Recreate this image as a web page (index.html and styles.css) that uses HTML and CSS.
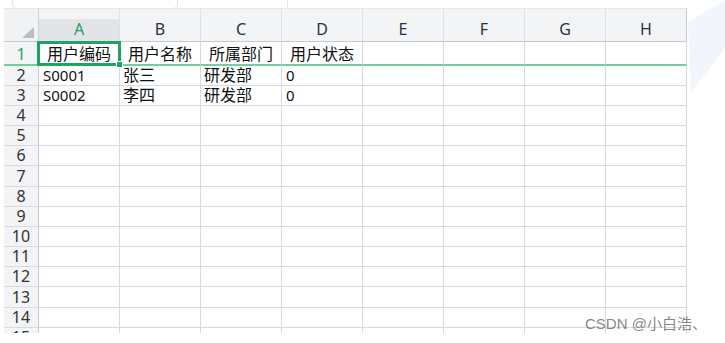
FILE: index.html
```html
<!DOCTYPE html>
<html>
<head>
<meta charset="utf-8">
<link rel="stylesheet" href="styles.css">
</head>
<body>
<div class="page">
  <svg class="deco" width="40" height="100" viewBox="0 0 40 100"><polygon points="0,22 37,0 37,48 3,92" fill="#f2f5fc"/></svg>
  <div class="topbar">
    <div class="tab1"></div>
    <div class="tab2"></div>
  </div>
  <div class="sheet">
    <div class="row head">
      <div class="corner"><span class="tri"></span></div>
      <div class="col sel-col">A</div><div class="col">B</div><div class="col">C</div><div class="col">D</div><div class="col">E</div><div class="col">F</div><div class="col">G</div><div class="col">H</div>
    </div>
    <div class="row r1">
      <div class="num active">1</div>
      <div class="cell first"><span class="txt">用户编码</span><div class="sel"><span class="handle"></span></div></div>
      <div class="cell"><span class="txt">用户名称</span></div>
      <div class="cell"><span class="txt">所属部门</span></div>
      <div class="cell"><span class="txt">用户状态</span></div>
      <div class="cell"></div><div class="cell"></div><div class="cell"></div><div class="cell"></div>
    </div>
    <div class="row r2">
      <div class="num">2</div>
      <div class="cell lat">S0001</div><div class="cell">张三</div><div class="cell">研发部</div><div class="cell lat">0</div>
      <div class="cell"></div><div class="cell"></div><div class="cell"></div><div class="cell"></div>
    </div>
    <div class="row r2">
      <div class="num">3</div>
      <div class="cell lat">S0002</div><div class="cell">李四</div><div class="cell">研发部</div><div class="cell lat">0</div>
      <div class="cell"></div><div class="cell"></div><div class="cell"></div><div class="cell"></div>
    </div>
    <div class="row"><div class="num">4</div><div class="cell"></div><div class="cell"></div><div class="cell"></div><div class="cell"></div><div class="cell"></div><div class="cell"></div><div class="cell"></div><div class="cell"></div></div>
    <div class="row"><div class="num">5</div><div class="cell"></div><div class="cell"></div><div class="cell"></div><div class="cell"></div><div class="cell"></div><div class="cell"></div><div class="cell"></div><div class="cell"></div></div>
    <div class="row"><div class="num">6</div><div class="cell"></div><div class="cell"></div><div class="cell"></div><div class="cell"></div><div class="cell"></div><div class="cell"></div><div class="cell"></div><div class="cell"></div></div>
    <div class="row"><div class="num">7</div><div class="cell"></div><div class="cell"></div><div class="cell"></div><div class="cell"></div><div class="cell"></div><div class="cell"></div><div class="cell"></div><div class="cell"></div></div>
    <div class="row"><div class="num">8</div><div class="cell"></div><div class="cell"></div><div class="cell"></div><div class="cell"></div><div class="cell"></div><div class="cell"></div><div class="cell"></div><div class="cell"></div></div>
    <div class="row"><div class="num">9</div><div class="cell"></div><div class="cell"></div><div class="cell"></div><div class="cell"></div><div class="cell"></div><div class="cell"></div><div class="cell"></div><div class="cell"></div></div>
    <div class="row"><div class="num">10</div><div class="cell"></div><div class="cell"></div><div class="cell"></div><div class="cell"></div><div class="cell"></div><div class="cell"></div><div class="cell"></div><div class="cell"></div></div>
    <div class="row"><div class="num">11</div><div class="cell"></div><div class="cell"></div><div class="cell"></div><div class="cell"></div><div class="cell"></div><div class="cell"></div><div class="cell"></div><div class="cell"></div></div>
    <div class="row"><div class="num">12</div><div class="cell"></div><div class="cell"></div><div class="cell"></div><div class="cell"></div><div class="cell"></div><div class="cell"></div><div class="cell"></div><div class="cell"></div></div>
    <div class="row"><div class="num">13</div><div class="cell"></div><div class="cell"></div><div class="cell"></div><div class="cell"></div><div class="cell"></div><div class="cell"></div><div class="cell"></div><div class="cell"></div></div>
    <div class="row"><div class="num">14</div><div class="cell"></div><div class="cell"></div><div class="cell"></div><div class="cell"></div><div class="cell"></div><div class="cell"></div><div class="cell"></div><div class="cell"></div></div>
    <div class="row"><div class="num">15</div><div class="cell"></div><div class="cell"></div><div class="cell"></div><div class="cell"></div><div class="cell"></div><div class="cell"></div><div class="cell"></div><div class="cell"></div></div>
  </div>
  <div class="watermark">CSDN @小白浩、</div>
</div>
</body>
</html>
```

FILE: styles.css
```css
* { box-sizing: border-box; }
html, body { margin: 0; padding: 0; background: #ffffff; }
.page {
  position: relative;
  width: 725px;
  height: 343px;
  overflow: hidden;
  font-family: "Noto Sans", "Noto Sans CJK SC", sans-serif;
  color: #1f1f1f;
}
.deco { position: absolute; left: 688px; top: 0; }
.topbar { height: 8px; display: flex; }
.tab1 {
  margin-left: 12px;
  width: 166px;
  height: 9px;
  border: 1px solid #dfe2e7;
  border-top: none;
  border-radius: 0 0 5px 5px;
}
.tab2 {
  margin-left: 109px;
  width: 10px;
  height: 9px;
  border-left: 1px solid #e3e5e9;
}
.sheet {
  margin-left: 4px;
  width: 684px;
  height: 325px;
  overflow: hidden;
  display: flex;
  flex-direction: column;
}
.row {
  display: grid;
  grid-template-columns: 35px repeat(8, 81px);
  height: 20.17px;
  flex: none;
}
.row.head { height: 34px; }
.row.r1 { height: 24px; }
.row.r2 { height: 20px; }
.corner {
  position: relative;
  background: #f1f2f4;
  border-top: 1px solid #e4e6ea;
  border-right: 1px solid #c9cdd6;
  border-bottom: 1px solid #c4c9d3;
}
.tri {
  position: absolute;
  left: 18px;
  top: 18px;
  width: 0;
  height: 0;
  border-left: 12px solid transparent;
  border-bottom: 11px solid #b9bdc5;
}
.col {
  display: flex;
  align-items: flex-end;
  justify-content: center;
  padding-bottom: 4px;
  font-size: 16px;
  line-height: 16px;
  color: #2a3344;
  background: #f3f4f6;
  border-top: 1px solid #e4e6ea;
  border-right: 1px solid #dde0e6;
  border-bottom: 1px solid #c4c9d3;
}
.col.sel-col {
  color: #21a162;
  background: linear-gradient(#f3f4f6 0, #f3f4f6 10px, #e2e4e8 10px);
}
.col:last-child { border-right: 1px solid #c9cdd6; }
.num {
  display: flex;
  align-items: flex-end;
  justify-content: center;
  font-size: 16px;
  line-height: 19px;
  color: #333333;
  background: #f3f4f6;
  border-right: 1px solid #c4c9d3;
  border-bottom: 1px solid #d6dae3;
}
.num.active { color: #27a666; }
.cell {
  display: flex;
  align-items: flex-end;
  padding-left: 3px;
  font-size: 16px;
  line-height: 19px;
  white-space: nowrap;
  border-right: 1px solid #d3d8e4;
  border-bottom: 1px solid #d3d8e4;
  color: #111111;
}
.cell.lat { font-size: 15px; padding-left: 4px; }
.r1 .num, .r1 .cell { border-bottom: 2px solid #74cc9f; }
.r1 .cell { padding-left: 8px; line-height: 20px; }
.cell.first { position: relative; z-index: 2; }
.sel {
  position: absolute;
  left: -2px;
  top: -1px;
  right: -2px;
  bottom: -2px;
  border: 3px solid #21a162;
}
.handle {
  position: absolute;
  right: -5px;
  bottom: -5px;
  width: 7px;
  height: 7px;
  background: #21a162;
  border: 1px solid #ffffff;
}
.watermark {
  position: absolute;
  left: 585px;
  top: 315px;
  font-family: "Liberation Sans", "Noto Sans CJK SC", sans-serif;
  font-size: 15px;
  line-height: 18px;
  color: rgba(110, 110, 110, 0.85);
  white-space: nowrap;
}
```
